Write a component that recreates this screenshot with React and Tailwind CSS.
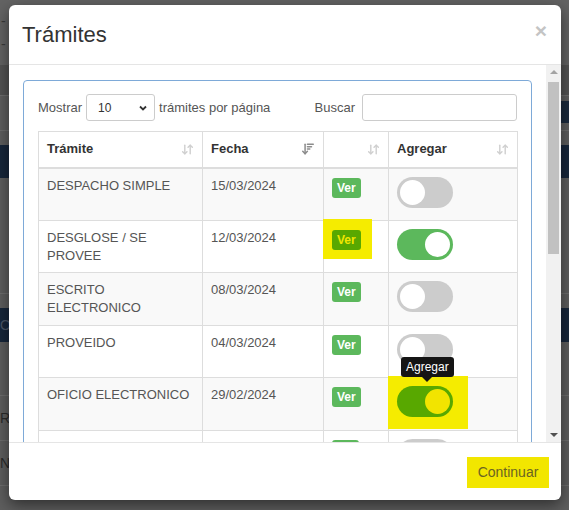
import React from "react";
import { ArrowDownUp, ArrowDownWideNarrow } from "lucide-react";

const rows = [
  { name: "DESPACHO SIMPLE", date: "15/03/2024", on: false },
  { name: "DESGLOSE / SE PROVEE", date: "12/03/2024", on: true, markVer: true },
  { name: "ESCRITO ELECTRONICO", date: "08/03/2024", on: false },
  { name: "PROVEIDO", date: "04/03/2024", on: false },
  { name: "OFICIO ELECTRONICO", date: "29/02/2024", on: true, markToggle: true },
  { name: "", date: "", on: false, hidden: true },
];

const Toggle = ({ on, marked }) => {
  const track = marked ? "bg-[#58a800]" : on ? "bg-[#5cb85c]" : "bg-[#cccccc]";
  const knob = marked ? "bg-[#f2e400]" : "bg-white";
  return (
    <div
      className={`relative flex h-[31px] w-[56px] items-center rounded-full px-[3px] ${track} ${
        on ? "justify-end" : "justify-start"
      }`}
    >
      <div className={`h-[25px] w-[25px] rounded-full ${knob}`} />
    </div>
  );
};

const VerBadge = ({ marked, blank }) => (
  <span
    className={`inline-flex h-[20px] min-w-[27px] items-center rounded-[3px] px-[5px] text-[12px] font-bold ${
      marked ? "bg-[#58a800] text-[#f2e600]" : "bg-[#5cb85c] text-white"
    }`}
  >
    {blank ? "" : "Ver"}
  </span>
);

const Backdrop = () => (
  <div className="flex flex-col text-[14px] text-[#2a2a2a]">
    <div className="flex h-[65px] flex-col justify-between bg-[#636363] py-[14px] pl-[1px] text-[#3a3a3a]">
      <span className="leading-none tracking-[3px]">- -</span>
      <span className="leading-none tracking-[3px]">- -</span>
    </div>
    <div className="h-[30px] bg-[#535353]" />
    <div className="flex h-[35px] justify-end border-t border-[#6d6d6d] bg-[#5e5e5e] pt-[5px]">
      <span className="h-[22px] w-[40px] bg-[#1b2a3d] pt-[2px] text-[#4a5566]">ga</span>
    </div>
    <div className="h-[15px] border-t border-[#6d6d6d] bg-[#5e5e5e]" />
    <div className="h-[33px] bg-[#17263a]" />
    <div className="h-[115px] bg-[#5e5e5e]" />
    <div className="h-[15px] border-t border-[#6d6d6d] bg-[#5e5e5e]" />
    <div className="flex h-[34px] items-center bg-[#17263a] text-[#4a5566]">O</div>
    <div className="h-[53px] bg-[#5e5e5e]" />
    <div className="flex h-[45px] items-center border-t border-[#6d6d6d] bg-[#5e5e5e]">R</div>
    <div className="flex h-[45px] items-center border-t border-[#6d6d6d] bg-[#5e5e5e]">NI</div>
    <div className="h-[30px] border-t border-[#6d6d6d] bg-[#5e5e5e]" />
  </div>
);

export default function App() {
  return (
    <div className="relative h-[510px] w-[569px] overflow-hidden bg-[#5e5e5e] font-['Liberation_Sans',Arial,sans-serif]">
      <Backdrop />

      <div className="absolute left-[9px] top-[5px] flex h-[495px] w-[552px] flex-col overflow-hidden rounded-[6px] bg-white shadow-[0_5px_15px_rgba(0,0,0,0.5)]">
        {/* header */}
        <div className="flex h-[60px] items-start justify-between border-b border-[#e5e5e5] pl-[13px] pr-[14px] pt-[16px]">
          <h4 className="text-[22px] leading-[28px] text-[#333]">Trámites</h4>
          <button className="-mt-[1px] text-[21px] font-bold leading-none text-[#c4c4c4]">×</button>
        </div>

        {/* body */}
        <div className="flex h-[377px]">
          <div className="flex-1 overflow-hidden px-[14px] pt-[15px]">
            <div className="rounded-[4px] border border-[#7eaad8] px-[14px] pt-[13px] pb-4">
              <div className="flex h-[27px] items-center text-[13px] text-[#555]">
                <span>Mostrar</span>
                <div className="ml-[4px] flex h-[27px] w-[69px] items-center justify-between rounded-[3px] border border-[#ccc] pl-[11px] pr-[6px] text-[12px] text-[#333]">
                  <span>10</span>
                  <svg width="10" height="10" viewBox="0 0 10 10">
                    <path d="M2 3.5 5 6.5 8 3.5" fill="none" stroke="#333" strokeWidth="1.8" />
                  </svg>
                </div>
                <span className="ml-[4px]">trámites por página</span>
                <span className="ml-auto mr-[7px]">Buscar</span>
                <div className="h-[27px] w-[155px] rounded-[3px] border border-[#ccc]" />
              </div>

              <table className="mt-[10px] w-[479px] table-fixed border-collapse text-[13px] leading-[18px]">
                <colgroup>
                  <col className="w-[164px]" />
                  <col className="w-[121px]" />
                  <col className="w-[65px]" />
                  <col className="w-[129px]" />
                </colgroup>
                <thead>
                  <tr className="h-[36px]">
                    <th className="border border-b-2 border-[#ddd] px-2 text-left font-bold text-[#333]">
                      <div className="flex items-center justify-between">
                        <span>Trámite</span>
                        <ArrowDownUp size={13} strokeWidth={2.6} color="#cfcfcf" />
                      </div>
                    </th>
                    <th className="border border-b-2 border-[#ddd] px-2 text-left font-bold text-[#333]">
                      <div className="flex items-center justify-between">
                        <span>Fecha</span>
                        <ArrowDownWideNarrow size={14} strokeWidth={2.6} color="#8c8c8c" />
                      </div>
                    </th>
                    <th className="border border-b-2 border-[#ddd] px-2">
                      <div className="flex items-center justify-end">
                        <ArrowDownUp size={13} strokeWidth={2.6} color="#cfcfcf" />
                      </div>
                    </th>
                    <th className="border border-b-2 border-[#ddd] px-2 text-left font-bold text-[#333]">
                      <div className="flex items-center justify-between">
                        <span>Agregar</span>
                        <ArrowDownUp size={13} strokeWidth={2.6} color="#cfcfcf" />
                      </div>
                    </th>
                  </tr>
                </thead>
                <tbody>
                  {rows.map((r, i) => (
                    <tr key={i} className={`h-[52.5px] ${i % 2 === 0 ? "bg-[#f9f9f9]" : "bg-white"}`}>
                      <td className="border border-[#ddd] px-2 pt-[8px] align-top text-[#555]">{r.name}</td>
                      <td className="border border-[#ddd] px-2 pt-[8px] align-top text-[#555]">{r.date}</td>
                      <td className="relative border border-[#ddd] px-2 pt-[9px] align-top">
                        {r.markVer && (
                          <div className="absolute left-[-1px] top-[-2px] h-[40px] w-[49px] bg-[#f5ec00]" />
                        )}
                        <div className="relative">
                          <VerBadge marked={r.markVer} blank={r.hidden} />
                        </div>
                      </td>
                      <td className="relative border border-[#ddd] px-2 pt-[8px] align-top">
                        {r.markToggle && (
                          <>
                            <div className="absolute left-[-1px] top-[-2px] h-[53px] w-[80px] bg-[#f5ec00]" />
                            <div className="absolute left-[12px] top-[-21px] z-10 flex flex-col items-center">
                              <span className="rounded-[3px] bg-[#151515] px-[5px] py-[3px] text-[12px] leading-[14px] text-white">
                                Agregar
                              </span>
                              <span className="h-0 w-0 border-x-[5px] border-t-[5px] border-x-transparent border-t-[#151515]" />
                            </div>
                          </>
                        )}
                        <div className="relative">
                          <Toggle on={r.on} marked={r.markToggle} />
                        </div>
                      </td>
                    </tr>
                  ))}
                </tbody>
              </table>
            </div>
          </div>

          {/* scrollbar */}
          <div className="flex w-[15px] flex-col items-center bg-[#f1f1f1] py-[5px]">
            <span className="h-0 w-0 border-x-[4px] border-b-[4px] border-x-transparent border-b-[#a3a3a3]" />
            <div className="mt-[8px] h-[172px] w-[11px] bg-[#c1c1c1]" />
            <div className="flex-1" />
            <span className="h-0 w-0 border-x-[4px] border-t-[4px] border-x-transparent border-t-[#505050]" />
          </div>
        </div>

        {/* footer */}
        <div className="flex flex-1 items-start justify-end border-t border-[#e5e5e5] pr-[12px] pt-[14px]">
          <button className="h-[31px] w-[82px] bg-[#f2e600] text-[14px] text-[#6b6422]">Continuar</button>
        </div>
      </div>
    </div>
  );
}
